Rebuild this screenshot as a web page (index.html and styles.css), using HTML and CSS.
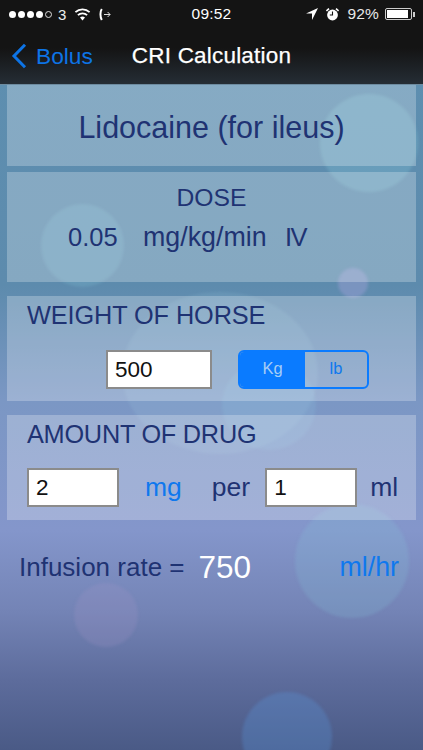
FILE: index.html
```html
<!DOCTYPE html>
<html lang="en">
<head>
<meta charset="utf-8">
<title>CRI Calculation</title>
<link rel="stylesheet" href="styles.css">
</head>
<body>
<div class="screen">
  <div class="bokeh" aria-hidden="true">
    <span class="bub b1"></span><span class="bub b2"></span><span class="bub b3"></span>
    <span class="bub b4"></span><span class="bub b5"></span><span class="bub b6"></span>
    <span class="bub b7"></span><span class="bub b8"></span>
  </div>
  <header class="top">
    <div class="status">
      <div class="st-left">
        <div class="dots"><i></i><i></i><i></i><i></i><i class="off"></i></div>
        <span class="carrier">3</span>
        <svg class="wifi" width="17" height="13" viewBox="0 0 17 13"><path d="M8.5 12.6 6 9.6a3.6 3.6 0 0 1 5 0z" fill="#fff"/><path d="M3.9 7.2a6.6 6.6 0 0 1 9.2 0M1.4 4.2a10.4 10.4 0 0 1 14.2 0" fill="none" stroke="#fff" stroke-width="1.8"/></svg>
        <svg class="call" width="12" height="13" viewBox="0 0 12 13"><path d="M2.8 1C1 3.5 1 9 2.8 12" fill="none" stroke="#fff" stroke-width="2"/><path d="M5 6.5h6M8.6 4l2.5 2.5L8.6 9" fill="none" stroke="#ddd" stroke-width="1"/></svg>
      </div>
      <span class="time">09:52</span>
      <div class="st-right">
        <svg class="loc" width="12" height="12" viewBox="0 0 12 12"><path d="M12 0 0 5.6h6V12z" fill="#fff"/></svg>
        <svg class="alarm" width="13" height="13" viewBox="0 0 13 13"><circle cx="6.5" cy="7" r="5.4" fill="#fff"/><path d="M6.5 3.6V7H3.8" fill="none" stroke="#141414" stroke-width="1.1"/><path d="M.4 3 3 .6M12.6 3 10 .6" stroke="#fff" stroke-width="1.6"/></svg>
        <span class="pct">92%</span>
        <div class="battery"><div class="cell"><div class="fill"></div></div><div class="nub"></div></div>
      </div>
    </div>
    <nav class="nav">
      <a class="back">
        <svg width="16" height="26" viewBox="0 0 16 26"><path d="M14 1.8 3 13l11 11.2" fill="none" stroke="#0d74e6" stroke-width="3"/></svg>
        <span>Bolus</span>
      </a>
      <h1 class="title">CRI Calculation</h1>
    </nav>
  </header>
  <main class="content">
    <section class="card drug">Lidocaine (for ileus)</section>
    <section class="card dose">
      <h2 class="dose-head">DOSE</h2>
      <p class="dose-line"><span class="dl-num">0.05</span><span class="dl-unit">mg/kg/min</span><span class="dl-route">IV</span></p>
    </section>
    <section class="card weight">
      <h2 class="sec-head">WEIGHT OF HORSE</h2>
      <div class="weight-row">
        <input class="field field-w" type="text" value="500">
        <div class="seg"><span class="seg-on">Kg</span><span class="seg-off">lb</span></div>
      </div>
    </section>
    <section class="card amount">
      <h2 class="sec-head">AMOUNT OF DRUG</h2>
      <div class="amount-row">
        <input class="field field-a" type="text" value="2">
        <span class="blue mg">mg</span>
        <span class="per">per</span>
        <input class="field field-a" type="text" value="1">
        <span class="ml">ml</span>
      </div>
    </section>
    <div class="result">
      <span class="res-label">Infusion rate =</span>
      <span class="res-val">750</span>
      <span class="blue res-unit">ml/hr</span>
    </div>
  </main>
</div>
</body>
</html>
```
FILE: styles.css
```css
* { box-sizing: border-box; }
html, body { margin: 0; padding: 0; }
body { font-family: "Liberation Sans", Arial, sans-serif; color: #1f3373; }
.screen {
  position: relative;
  width: 423px;
  height: 750px;
  overflow: hidden;
  background: linear-gradient(180deg, #5e90b1 0, #5d8bad 285px, #7b97c4 400px, #8496cb 530px, #7484b6 610px, #5d6c9c 680px, #4a5a86 750px);
}
.bokeh { position: absolute; inset: 0; }
.bub { position: absolute; border-radius: 50%; filter: blur(1.5px); }
.b1 { left: 320px; top: 94px; width: 98px; height: 98px; background: rgba(150,225,235,.2); }
.b2 { left: 41px; top: 204px; width: 83px; height: 83px; background: rgba(150,225,235,.16); }
.b3 { left: 338px; top: 268px; width: 30px; height: 30px; background: rgba(190,170,235,.3); }
.b4 { left: 122px; top: 292px; width: 196px; height: 162px; background: rgba(190,235,245,.1); }
.b5 { left: 222px; top: 360px; width: 94px; height: 90px; background: rgba(150,215,240,.13); }
.b6 { left: 295px; top: 504px; width: 114px; height: 114px; background: rgba(135,200,220,.2); }
.b7 { left: 74px; top: 583px; width: 64px; height: 64px; background: rgba(165,150,200,.22); }
.b8 { left: 242px; top: 692px; width: 90px; height: 90px; background: rgba(90,150,220,.3); }

.top {
  position: relative;
  height: 85px;
  background: linear-gradient(180deg, #141414 0, #141414 48px, #252d35 84px);
  border-bottom: 1px solid #6d8ba0;
}
.status {
  position: relative;
  height: 28px;
  display: flex;
  align-items: center;
  justify-content: space-between;
  padding: 0 8px 0 9px;
  color: #fff;
  font-size: 14.5px;
}
.st-left, .st-right { display: flex; align-items: center; }
.dots { display: flex; gap: 2px; }
.dots i { width: 7px; height: 7px; border-radius: 50%; background: #fff; }
.dots i.off { background: none; border: 1px solid #ddd; }
.carrier { margin-left: 6px; font-size: 15px; color: #eee; }
.wifi { margin-left: 8px; }
.call { margin-left: 8px; }
.time { position: absolute; left: 0; right: 0; text-align: center; font-size: 15.5px; letter-spacing: .2px; }
.loc { margin-right: 8px; }
.alarm { margin-right: 8px; }
.pct { color: #e8e8e8; font-size: 15.5px; letter-spacing: .2px; margin-right: 6px; }
.battery { display: flex; align-items: center; }
.cell { width: 27px; height: 12px; border: 1px solid #ccc; padding: 1px; border-radius: 2px; }
.fill { width: 92%; height: 100%; background: #fff; }
.nub { width: 2px; height: 5px; margin-left: 1px; background: #ccc; }

.nav { position: relative; height: 56px; display: flex; align-items: center; padding-left: 11px; }
.back { display: flex; align-items: center; gap: 9px; color: #0d74e6; font-size: 22.7px; }
.title {
  position: absolute; left: 0; right: 0; margin: 0; text-align: center;
  font-size: 22.5px; font-weight: 400; color: #fff; letter-spacing: .2px;
  -webkit-text-stroke: .25px #fff;
}

.content { position: relative; padding: 0 7px; }
.card { background: rgba(255,255,255,.25); }
h2 { margin: 0; font-weight: 400; }
.drug { height: 81px; display: flex; align-items: center; justify-content: center; font-size: 30.5px; padding-top: 4px; }
.dose { height: 110px; margin-top: 6px; padding-top: 12px; }
.dose-head { text-align: center; font-size: 24.7px; line-height: 28px; }
.dose-line { margin: 11px 0 0; padding-left: 61px; display: flex; font-size: 25.5px; line-height: 28px; }
.dl-num { width: 75px; }
.dl-unit { width: 142px; font-size: 26.8px; }
.dl-route { letter-spacing: -1.5px; }
.weight, .amount { height: 105px; padding: 5px 20px 0; }
.weight { margin-top: 14px; }
.amount { margin-top: 14px; }
.sec-head { font-size: 25.3px; line-height: 29px; letter-spacing: -.1px; }
.amount .sec-head { letter-spacing: -.25px; }
.field {
  height: 39px; border: 2px solid #8b8b8b; border-radius: 0; background: #fff;
  padding: 0 0 0 7px; margin: 0; font: 22.5px "Liberation Sans", Arial, sans-serif; color: #111; outline: none;
}
.field-w { width: 106px; }
.field-a { width: 92px; }
.weight-row { display: flex; margin-top: 20px; padding-left: 79px; gap: 26px; }
.seg { width: 131px; height: 39px; display: flex; border: 2px solid #0a7bff; border-radius: 6px; overflow: hidden; font-size: 16.5px; }
.seg span { display: flex; align-items: center; justify-content: center; padding-bottom: 3px; }
.seg-on { width: 65px; background: #0a7bff; color: #a6cdf5; }
.seg-off { flex: 1; color: #0f78ee; }
.amount-row { display: flex; align-items: center; margin-top: 19px; font-size: 26.5px; }
.blue { color: #0f78ee; }
.mg { margin-left: 26px; }
.per { margin-left: 30px; margin-right: 15px; }
.ml { margin-left: 13px; }
.result { display: flex; align-items: center; height: 34px; margin-top: 30px; padding-left: 12px; font-size: 26px; }
.res-val { margin-left: 14px; font-size: 31.5px; color: #fff; }
.res-unit { margin-left: auto; margin-right: 17px; font-size: 26.8px; }
```
